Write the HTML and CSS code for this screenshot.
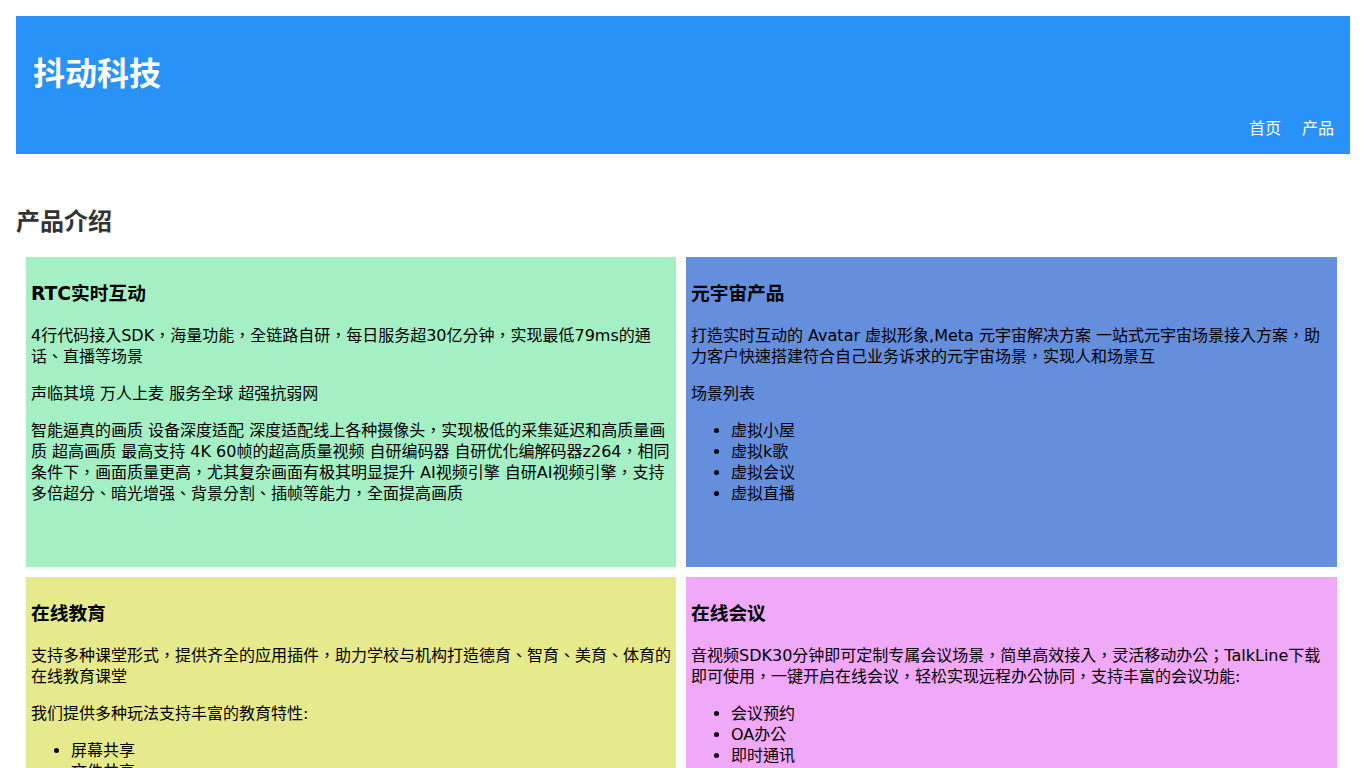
FILE: index.html
```html
<!DOCTYPE html>
<html>
<head>
<meta charset="utf-8">
<title>抖动科技</title>
<link rel="stylesheet" href="styles.css">
</head>
<body class="page">
  <header class="top">
    <h1 class="brand">抖动科技</h1>
    <nav class="nav">
      <a class="nav-link" href="#">首页</a>
      <a class="nav-link" href="#">产品</a>
    </nav>
  </header>
  <main>
    <h2 class="section-title">产品介绍</h2>
    <div class="grid">
      <section class="card card-green">
        <h3 class="card-title">RTC实时互动</h3>
        <p class="text">4行代码接入SDK，海量功能，全链路自研，每日服务超30亿分钟，实现最低79ms的通话、直播等场景</p>
        <p class="text">声临其境 万人上麦 服务全球 超强抗弱网</p>
        <p class="text">智能逼真的画质 设备深度适配 深度适配线上各种摄像头，实现极低的采集延迟和高质量画质 超高画质 最高支持 4K 60帧的超高质量视频 自研编码器 自研优化编解码器z264，相同条件下，画面质量更高，尤其复杂画面有极其明显提升 AI视频引擎 自研AI视频引擎，支持多倍超分、暗光增强、背景分割、插帧等能力，全面提高画质</p>
      </section>
      <section class="card card-blue">
        <h3 class="card-title">元宇宙产品</h3>
        <p class="text">打造实时互动的 Avatar 虚拟形象,Meta 元宇宙解决方案 一站式元宇宙场景接入方案，助力客户快速搭建符合自己业务诉求的元宇宙场景，实现人和场景互</p>
        <p class="text">场景列表</p>
        <ul class="list">
          <li>虚拟小屋</li>
          <li>虚拟k歌</li>
          <li>虚拟会议</li>
          <li>虚拟直播</li>
        </ul>
      </section>
      <section class="card card-yellow">
        <h3 class="card-title">在线教育</h3>
        <p class="text">支持多种课堂形式，提供齐全的应用插件，助力学校与机构打造德育、智育、美育、体育的在线教育课堂</p>
        <p class="text">我们提供多种玩法支持丰富的教育特性:</p>
        <ul class="list">
          <li>屏幕共享</li>
          <li>文件共享</li>
          <li>互动白板</li>
          <li>课堂录制</li>
        </ul>
      </section>
      <section class="card card-pink">
        <h3 class="card-title">在线会议</h3>
        <p class="text">音视频SDK30分钟即可定制专属会议场景，简单高效接入，灵活移动办公；TalkLine下载即可使用，一键开启在线会议，轻松实现远程办公协同，支持丰富的会议功能:</p>
        <ul class="list">
          <li>会议预约</li>
          <li>OA办公</li>
          <li>即时通讯</li>
          <li>会议录制</li>
        </ul>
      </section>
    </div>
  </main>
</body>
</html>
```
FILE: styles.css
```css
.page {
  margin: 16px;
  font-family: "DejaVu Sans", "Noto Sans CJK TC", "Noto Sans CJK SC", sans-serif;
  font-size: 16px;
  line-height: 21px;
  color: #000;
  background: #fff;
}

.top {
  height: 138px;
  box-sizing: border-box;
  background: #2892f8;
  color: #fff;
  padding: 38px 16px 0 17px;
  display: flex;
  flex-direction: column;
}

.brand {
  margin: 0;
  font-size: 32px;
  line-height: 40px;
  font-weight: bold;
}

.nav {
  margin-top: 24px;
  display: flex;
  justify-content: flex-end;
  gap: 21px;
}

.nav-link {
  color: #fff;
  text-decoration: none;
  line-height: 21px;
}

.section-title {
  margin: 53px 0 20px;
  font-size: 24px;
  line-height: 30px;
  font-weight: bold;
  color: #333;
}

.grid {
  display: grid;
  grid-template-columns: 650px 651px;
  gap: 10px;
  padding-left: 10px;
}

.card {
  height: 310px;
  box-sizing: border-box;
  padding: 5px;
  overflow: hidden;
}

.card-green { background: #a4f0c4; }
.card-blue { background: #658edc; }
.card-yellow { background: #e6ea8c; }
.card-pink { background: #f0a8f8; }

.card-title {
  margin: 18.72px 0;
  font-size: 18.72px;
  line-height: 25px;
  font-weight: bold;
}

.text {
  margin: 16px 0;
}

.text:first-of-type {
  padding-top: 1px;
}

.list {
  margin: 16px 0;
  padding-left: 40px;
}
```
